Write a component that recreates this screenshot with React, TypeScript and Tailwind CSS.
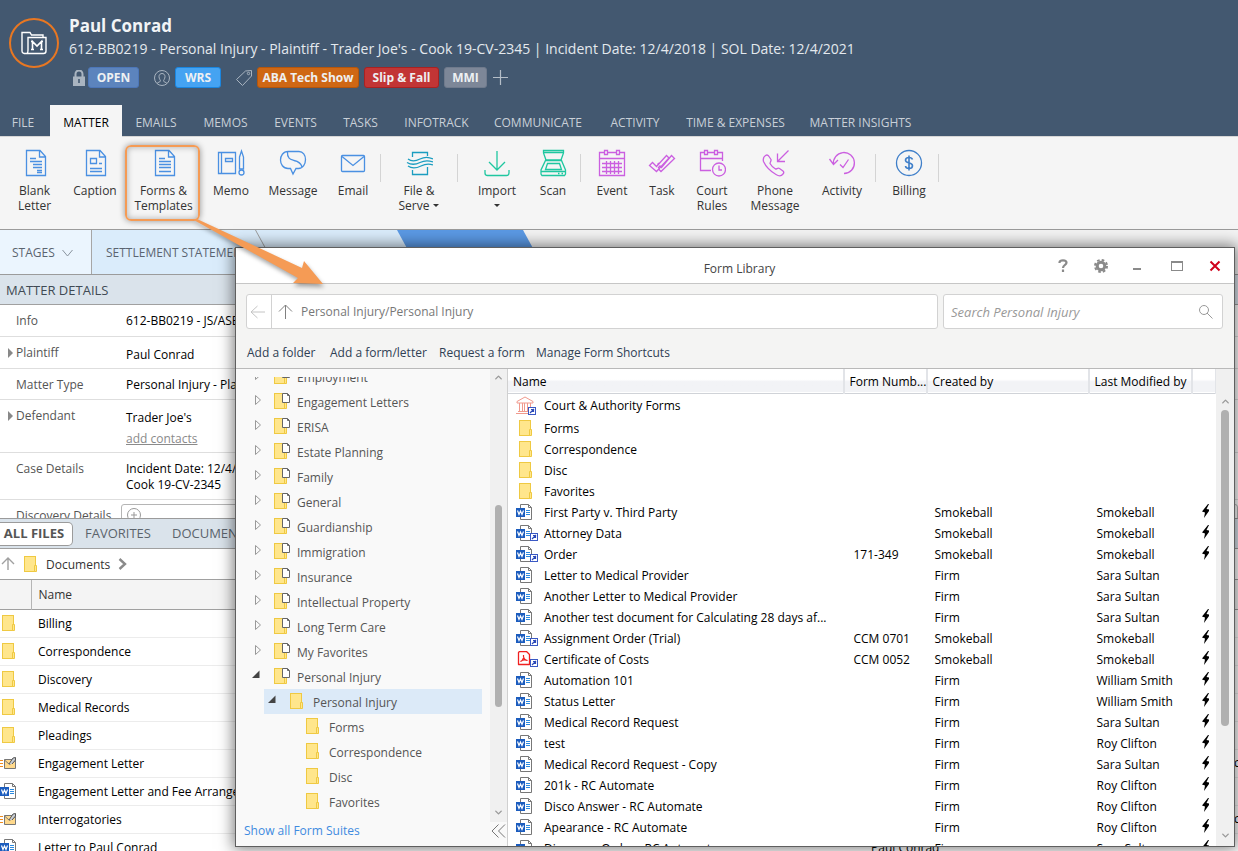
import React from 'react';
import { ChevronDown, ChevronUp } from 'lucide-react';

type IconProps = { children: React.ReactNode; color: string };

const RibbonIcon = ({ children, color }: IconProps) => (
  <svg width="28" height="28" viewBox="0 0 28 28" fill="none" stroke={color} strokeWidth="1.3" className="shrink-0">
    {children}
  </svg>
);

const BLUE = '#4a90e2';
const TEAL = '#1b9dc0';
const GREEN = '#1fc7a0';
const PURPLE = '#cb5fe0';

const docOutline = 'M5.500 1.500H19L24.500 7.500V26.500H5.500ZM18.500 1.500V8H24.500';

const icons = {
  blank: <RibbonIcon color={BLUE}><path d={docOutline} /><path d="M9 9.500H15M9 12.500H21M12 15.500H21M12 18.500H21M16 21.500H21M16 23.500H21" /></RibbonIcon>,
  caption: <RibbonIcon color={BLUE}><path d={docOutline} /><path d="M9.500 9.500H15.500V14.500H9.500ZM18 14.500H21M9 19.500H21M9 22.500H21" /></RibbonIcon>,
  forms: <RibbonIcon color={BLUE}><path d={docOutline} /><path d="M9 9.500H15M9 12.500H21M9 15.500H21M9 18.500H21M9 22.500H21" /></RibbonIcon>,
  memo: (
    <RibbonIcon color={BLUE}>
      <path d="M1.500 3.500H18.500V24.500H1.500ZM4.500 3.500V24.500M8.500 9.500H15.500V12.500H8.500ZM22.500 8L24.500 2L26.500 8V20H22.500Z" />
      <ellipse cx="24.500" cy="23.500" rx="2.500" ry="2.500" />
    </RibbonIcon>
  ),
  message: (
    <RibbonIcon color={BLUE}>
      <path d="M9 2.500H20C24 2.500 26.500 6 26.500 10.500S24 19.500 19.500 19.500H17L14 25L11.500 19.500H9C4 19.500 1.500 15 1.500 11S4 2.500 9 2.500ZM8.500 3C8 10 12 10.500 15 11.500C20 12.500 22 14 23 18" />
    </RibbonIcon>
  ),
  email: <RibbonIcon color={BLUE}><rect x="2.500" y="6.500" width="23" height="16" rx="1" /><path d="M3 7.500L14 16.500L25 7.500" /></RibbonIcon>,
  fileServe: (
    <RibbonIcon color={TEAL}>
      <path d="M7.500 8V3.500H22.500V7M7.500 21V25.500H22.500V18" />
      <path d="M3 10C7 13 11 12 15 10S24 8 28 10M2 13.500C7 16.500 11 15.500 15 13.500S24 11.500 28 13M3 17C7 20 12 19 16 17S24 14.500 28 16" />
    </RibbonIcon>
  ),
  importIcon: <RibbonIcon color={GREEN}><path d="M14 2V21M6 13L14 21L22 13M2 21V24Q2 26.500 4.500 26.500H23.500Q26 26.500 26 24V21" /></RibbonIcon>,
  scan: (
    <RibbonIcon color={GREEN}>
      <path d="M4.500 1.500H24.500V4L22 11H7L4.500 4ZM5 3.500H24M6.500 11.500H22.500L26.500 21V25L25.500 26.500H3L2 25V21ZM8.500 14.500H20.500L22.500 20.500H6.500ZM2 22.500H26M19 24.500H20.500M22.500 24.500H24" />
    </RibbonIcon>
  ),
  event: (
    <RibbonIcon color={PURPLE}>
      <path d="M6 3.500H1.500V26.500H26.500V3.500H22M10 3.500H18M1.500 9.500H26.500M6.500 1.500H9.500V5.500H6.500ZM18.500 1.500H21.500V5.500H18.500ZM4 14.500H24M4 18.500H24M4 22.500H24M8.500 12V25M12.500 12V25M16.500 12V25M20.500 12V25" />
    </RibbonIcon>
  ),
  task: (
    <RibbonIcon color={PURPLE}>
      <path d="M1.500 16.500L4.500 13.500L8.500 17.500L18.500 6.500L21 9L8.500 22.500Z" />
      <path d="M10 19L12 17L13.500 18.500L23.500 6.500L26.500 9.500L13 22.500L10.500 20M9.500 15.500L11 14" />
    </RibbonIcon>
  ),
  court: (
    <RibbonIcon color={PURPLE}>
      <path d="M6 3.500H2.500V21.500H13M10 3.500H16M20 3.500H24.500V12M2.500 9.500H24.500M6.500 1.500H9.500V5.500H6.500ZM16.500 1.500H19.500V5.500H16.500ZM21 16.500V21H24" />
      <circle cx="21" cy="20.500" r="6.500" />
    </RibbonIcon>
  ),
  phone: (
    <RibbonIcon color={PURPLE}>
      <path d="M4.500 6.500C6 5.500 7 6 8 7.500L10 10.500C10.500 12 9 13 9 14.500Q11 18 14.500 20C16 20 17 18.500 18.500 19.500L22 22Q23.500 23.500 22 25C20.500 27 18 27.500 15 25.500C9 22 5 18 2.500 12.500Q1.500 8.500 4.500 6.500Z" strokeLinejoin="round" />
      <path d="M27.500 1.500L16.500 12.500M16.500 4.500V12.500H24" />
    </RibbonIcon>
  ),
  activity: (
    <RibbonIcon color={PURPLE}>
      <path d="M5.500 15.500A10.500 10.500 0 1 1 16 24.500M1.500 10L5.500 15.500L10 11M12 15.500L15 18.500L20.500 10.500" />
    </RibbonIcon>
  ),
  billing: (
    <RibbonIcon color="#3f7fc9">
      <circle cx="14" cy="14" r="12.500" />
      <path d="M17.500 10.500C17 9 15.500 8.500 14 8.500C12 8.500 10.500 9.500 10.500 11.200C10.500 14.500 17.500 13 17.500 16.800C17.500 18.500 16 19.500 14 19.500C12 19.500 10.700 18.500 10.500 17M14 6.500V21.500" strokeWidth="1.600" />
    </RibbonIcon>
  ),
};

const Folder = ({ page = false }: { page?: boolean }) => (
  <svg width="17" height="17" viewBox="0 0 17 17" className="shrink-0">
    <rect x="0.500" y="0.500" width="11" height="15" fill="#ffe68c" stroke="#efc942" />
    <path d="M10.500 9.500H12.500V15.500H10.500Z" fill="#ffe68c" stroke="#efc942" />
    {page && <path d="M8.500 0.500H13.500L15.500 2.500V9.500H8.500ZM13.500 0.500V2.500H15.500" fill="#fff" stroke="#666" />}
  </svg>
);

const Shortcut = () => (
  <g>
    <rect x="14.500" y="8.500" width="7" height="7" fill="#fff" stroke="#3a58c4" />
    <path d="M16 14L20 10M17 10.500H19.500V13" fill="none" stroke="#2b49b8" strokeWidth="1.200" />
  </g>
);

const WordIcon = ({ shortcut = false }: { shortcut?: boolean }) => (
  <svg width="22" height="17" viewBox="0 0 22 17" className="shrink-0">
    <path d="M4.500 0.500H12.500L15.500 3.500V15.500H4.500Z" fill="#fff" stroke="#777" />
    <path d="M12.500 0.500V3.500H15.500" fill="none" stroke="#777" />
    <path d="M10 6.500H14M10 8.500H14M10 10.500H14" stroke="#2b8ae0" />
    <rect y="4" width="9" height="9" fill="#1b5cbe" />
    <path d="M1.500 6.500L3 10.500L4.500 7L6 10.500L7.500 6.500" fill="none" stroke="#fff" strokeWidth="1.200" />
    {shortcut && <Shortcut />}
  </svg>
);

const PdfIcon = () => (
  <svg width="22" height="17" viewBox="0 0 22 17" className="shrink-0">
    <path d="M3.500 0.500H10.500L13.500 3.500V13.500H2.500V1.500Z" fill="#fff" stroke="#f02020" strokeWidth="1.300" strokeLinejoin="round" />
    <path d="M4.500 10.500C6.500 10 8 7 7.500 4C7 7 9 9.500 11.500 9.500C9 8.500 6.500 9 4.500 10.500Z" fill="none" stroke="#f02020" strokeWidth="1.200" />
    <Shortcut />
  </svg>
);

const CourtIcon = () => (
  <svg width="22" height="20" viewBox="0 0 22 20" className="shrink-0">
    <path d="M1 5.500L9 1L17 5.500V7H1ZM3.500 7V15M6.500 7V15M8.500 7V15M11.500 7V15M14.500 7V15M2 15.500H16M0 17.500H18" fill="none" stroke="#f09a8e" />
    <rect x="12.500" y="11.500" width="7" height="7" fill="#fff" stroke="#3a58c4" />
    <path d="M14 17L18 13M15 13.500H17.500V16" fill="none" stroke="#2b49b8" strokeWidth="1.200" />
  </svg>
);

const MailIcon = () => (
  <svg width="18" height="14" viewBox="0 0 18 14" className="shrink-0">
    <path d="M0 4.500H3M0 7.500H3M0 10.500H3" stroke="#f08c1e" />
    <path d="M4.500 3.500H15.500V12.500H4.500Z" fill="#ffd98c" stroke="#777" />
    <path d="M4.500 4L9.500 8.500L15.500 4.500" fill="none" stroke="#777" />
    <path d="M9 8L13 2L15.500 1.500V4L12 8" fill="#c9ced4" stroke="#555" />
  </svg>
);

const Bolt = () => (
  <svg width="7" height="14" viewBox="0 0 7 14" className="block">
    <path d="M6 0L0 7.500L3 8.500L2 14L7 7V5.500L4.500 5L7 0Z" fill="#000" />
  </svg>
);

const tabs = [
  { label: 'FILE', width: 'w-[50px] pr-1' },
  { label: 'MATTER', width: 'w-[72px]', active: true },
  { label: 'EMAILS', width: 'w-[68px]' },
  { label: 'MEMOS', width: 'w-[71px]' },
  { label: 'EVENTS', width: 'w-[69px]' },
  { label: 'TASKS', width: 'w-[61px]' },
  { label: 'INFOTRACK', width: 'w-[91px]' },
  { label: 'COMMUNICATE', width: 'w-[112px]' },
  { label: 'ACTIVITY', width: 'w-[82px]' },
  { label: 'TIME & EXPENSES', width: 'w-[119px]' },
  { label: 'MATTER INSIGHTS', width: 'w-[131px]' },
];

type RibbonItem = { label: string[]; icon?: React.ReactNode; width: string; caret?: boolean; active?: boolean };

const ribbon: (RibbonItem | null)[] = [
  { label: ['Blank', 'Letter'], icon: icons.blank, width: 'w-[61px] ml-1' },
  { label: ['Caption'], icon: icons.caption, width: 'w-[60px]' },
  { label: ['Forms &', 'Templates'], icon: icons.forms, width: 'w-[77px]', active: true },
  { label: ['Memo'], icon: icons.memo, width: 'w-[58px]' },
  { label: ['Message'], icon: icons.message, width: 'w-[66px]' },
  { label: ['Email'], icon: icons.email, width: 'w-[54px]' },
  null,
  { label: ['File &', 'Serve'], icon: icons.fileServe, width: 'w-[76px]', caret: true },
  null,
  { label: ['Import', ''], icon: icons.importIcon, width: 'w-[78px]', caret: true },
  { label: ['Scan'], icon: icons.scan, width: 'w-[34px] mr-2.5' },
  null,
  { label: ['Event'], icon: icons.event, width: 'w-[52px] ml-[5px]' },
  { label: ['Task'], icon: icons.task, width: 'w-[48px]' },
  { label: ['Court', 'Rules'], icon: icons.court, width: 'w-[52px]' },
  { label: ['Phone', 'Message'], icon: icons.phone, width: 'w-[74px]' },
  { label: ['Activity'], icon: icons.activity, width: 'w-[60px] mr-[3px]' },
  null,
  { label: ['Billing'], icon: icons.billing, width: 'w-[58px] ml-1' },
  null,
];

const files = [
  { name: 'Billing', kind: 'folder' },
  { name: 'Correspondence', kind: 'folder' },
  { name: 'Discovery', kind: 'folder' },
  { name: 'Medical Records', kind: 'folder' },
  { name: 'Pleadings', kind: 'folder' },
  { name: 'Engagement Letter', kind: 'mail', more: 'c' },
  { name: 'Engagement Letter and Fee Arrangement', kind: 'word' },
  { name: 'Interrogatories', kind: 'mail', more: 'c' },
  { name: 'Letter to Paul Conrad', kind: 'word', contact: 'Paul Conrad' },
];

const suites = [
  'Employment', 'Engagement Letters', 'ERISA', 'Estate Planning', 'Family', 'General', 'Guardianship',
  'Immigration', 'Insurance', 'Intellectual Property', 'Long Term Care', 'My Favorites',
];

type FormRow = [kind: string, name: string, number?: string, created?: string, modified?: string, bolt?: boolean];

const forms: FormRow[] = [
  ['court', 'Court & Authority Forms'],
  ['folder', 'Forms'],
  ['folder', 'Correspondence'],
  ['folder', 'Disc'],
  ['folder', 'Favorites'],
  ['word', 'First Party v. Third Party', '', 'Smokeball', 'Smokeball', true],
  ['link', 'Attorney Data', '', 'Smokeball', 'Smokeball', true],
  ['link', 'Order', '171-349', 'Smokeball', 'Smokeball', true],
  ['word', 'Letter to Medical Provider', '', 'Firm', 'Sara Sultan'],
  ['word', 'Another Letter to Medical Provider', '', 'Firm', 'Sara Sultan'],
  ['word', 'Another test document for Calculating 28 days af...', '', 'Firm', 'Sara Sultan', true],
  ['link', 'Assignment Order (Trial)', 'CCM 0701', 'Smokeball', 'Smokeball', true],
  ['pdf', 'Certificate of Costs', 'CCM 0052', 'Smokeball', 'Smokeball', true],
  ['word', 'Automation 101', '', 'Firm', 'William Smith', true],
  ['word', 'Status Letter', '', 'Firm', 'William Smith', true],
  ['word', 'Medical Record Request', '', 'Firm', 'Sara Sultan', true],
  ['word', 'test', '', 'Firm', 'Roy Clifton', true],
  ['word', 'Medical Record Request - Copy', '', 'Firm', 'Sara Sultan', true],
  ['word', '201k - RC Automate', '', 'Firm', 'Roy Clifton', true],
  ['word', 'Disco Answer - RC Automate', '', 'Firm', 'Roy Clifton', true],
  ['word', 'Apearance - RC Automate', '', 'Firm', 'Roy Clifton', true],
  ['word', 'Discovery Order - RC Automate', '', 'Firm', 'Sara Sultan', true],
];

const formIcon = (kind: string) => {
  if (kind === 'court') return <CourtIcon />;
  if (kind === 'pdf') return <PdfIcon />;
  if (kind === 'folder') return <span className="ml-[3px]"><Folder /></span>;
  return <WordIcon shortcut={kind === 'link'} />;
};

const Header = () => (
  <header className="bg-[#435870] h-[136px] shrink-0 flex flex-col justify-between">
    <div className="flex pl-[9px] pt-4">
      <div className="w-[50px] h-[50px] mt-0.5 rounded-full border-2 border-[#e87722] flex items-center justify-center">
        <svg width="26" height="24" viewBox="0 0 26 24" fill="none" stroke="#fff" strokeWidth="1.4">
          <path d="M6 22.500Q1 23 1 20V1.500H9L10.500 4H22V6.500M6 22.500Q7 22 7 19V6.500H25V20Q25 22.500 22.500 22.500Z" />
          <path d="M11.500 18.500V10.500L16 15L20.500 10.500V18.500M10 18.500H13M19 18.500H22M10 10.500H11.500M20.500 10.500H22" strokeWidth="1.600" />
        </svg>
      </div>
      <div className="pl-2.5">
        <h1 className="text-[17px] leading-5 font-bold text-[#f2f4f6]">Paul Conrad</h1>
        <p className="text-[14px] leading-[25px] text-[#e4e9ee]">
          612-BB0219 - Personal Injury - Plaintiff - Trader Joe's - Cook 19-CV-2345 | Incident Date: 12/4/2018 | SOL Date: 12/4/2021
        </p>
        <div className="flex items-center pt-1.5 pl-1 text-[12px] leading-[19px] font-bold text-[#eef0f2] text-center">
          <svg width="12" height="16" viewBox="0 0 12 16" fill="none" className="mr-[3px]">
            <path d="M2.500 7V4A3.500 3.500 0 0 1 9.500 4V7" stroke="#a9b4c0" strokeWidth="2" />
            <rect y="6.500" width="12" height="9.500" fill="#a9b4c0" />
            <path d="M6 9V13" stroke="#435870" strokeWidth="1.600" />
          </svg>
          <span className="w-[51px] rounded-[3px] border border-[#4c76b8] bg-[#5c84bd]">OPEN</span>
          <svg width="16" height="16" viewBox="0 0 16 16" fill="none" stroke="#a9b4c0" className="ml-[15px] mr-[5px]">
            <circle cx="8" cy="8" r="7.500" />
            <path d="M3 13.500C4 12 6.500 12 6.500 11C6.500 10 5 9 5 6.500C5 4.500 6.500 3.500 8 3.500S11 4.500 11 6.500C11 9 9.500 10 9.500 11C9.500 12 12 12 13 13.500" />
          </svg>
          <span className="w-[46px] rounded-[3px] border border-[#1a86e0] bg-[#45a3f2]">WRS</span>
          <svg width="16" height="16" viewBox="0 0 16 16" fill="none" stroke="#a9b4c0" className="ml-[15px] mr-[5px]">
            <path d="M9.500 1L15.500 0.500V6L6.500 15.500L0.500 9.500Z" />
            <circle cx="12.500" cy="3.500" r="1.200" />
          </svg>
          <span className="w-[102px] rounded-[3px] border border-[#b4560c] bg-[#cf6714]">ABA Tech Show</span>
          <span className="w-[75px] ml-[5px] rounded-[3px] border border-[#a82222] bg-[#c23535]">Slip &amp; Fall</span>
          <span className="w-[43px] ml-[5px] rounded-[3px] border border-[#6f7a8c] bg-[#7d8798]">MMI</span>
          <button aria-label="Add tag" className="ml-1.5">
            <svg width="15" height="15" viewBox="0 0 15 15" stroke="#b5bec8" strokeWidth="1.2"><path d="M7.500 0V15M0 7.500H15" /></svg>
          </button>
        </div>
      </div>
    </div>
    <nav className="flex text-[12px] text-[#c9d0d8]">
      {tabs.map((t) => (
        <button
          key={t.label}
          className={`pt-1 shrink-0 whitespace-nowrap ${t.width} ${t.active ? 'relative h-8 -mb-px bg-[#f5f5f5] text-black' : 'h-[31px]'}`}
        >
          {t.label}
        </button>
      ))}
    </nav>
  </header>
);

const Ribbon = () => (
  <div className="h-[94px] shrink-0 flex bg-[#f5f5f5] border-t border-t-[#d6d6d6] border-b border-b-[#9b9b9b] text-[12px] leading-[15px] text-[#333]">
    {ribbon.map((item, i) =>
      item ? (
        <button key={i} className={`relative flex flex-col items-center pt-3 shrink-0 whitespace-nowrap ${item.width}`}>
          {item.active && (
            <span className="absolute left-0 top-2 w-[75px] h-[76px] rounded-md border-2 border-[#f59b55] shadow-[0_0_6px_rgba(0,0,0,0.4),inset_0_0_6px_rgba(0,0,0,0.3)]" />
          )}
          {item.icon}
          <span className="pt-1.5">{item.label[0]}</span>
          {item.label.length > 1 && (
            <span className="flex items-center justify-center gap-1 h-[15px]">
              {item.label[1]}
              {item.caret && <span className="border-x-[3px] border-x-transparent border-t-[3px] border-t-[#333]" />}
            </span>
          )}
        </button>
      ) : (
        <span key={i} className="w-px h-7 mt-[17px] shrink-0 bg-[#d4d4d4]" />
      ),
    )}
  </div>
);

const arrowClip = '[clip-path:polygon(0_0,calc(100%-12px)_0,100%_50%,calc(100%-12px)_100%,0_100%)]';

const Stages = () => (
  <div className="h-[44px] shrink-0 flex bg-[#f3f3f3] text-[12px] text-[#5b6470]">
    <button className="w-[92px] border-r border-[#a6a6a6] bg-[#ebf5fe] flex items-center gap-[7px] pl-3 pt-0.5">
      STAGES
      <svg width="11" height="8" viewBox="0 0 11 8" fill="none" stroke="#8a949e"><path d="M0.500 1L5.500 7L10.500 1" /></svg>
    </button>
    <button className={`relative z-20 w-[176px] bg-[#9b9b9b] ${arrowClip}`}>
      <span className={`flex h-full items-center mr-px bg-[#daecfb] pl-3.5 pt-0.5 whitespace-nowrap ${arrowClip}`}>SETTLEMENT STATEMENT</span>
    </button>
    <button aria-label="Next stage" className={`relative z-10 -ml-3 w-[153px] bg-[#daecfb] ${arrowClip}`} />
    <button aria-label="Current stage" className={`-ml-3 w-[138px] bg-[#5b99e4] ${arrowClip}`} />
  </div>
);

const Triangle = () => (
  <span className="w-0 h-0 border-y-[5px] border-y-transparent border-l-[5px] border-l-[#888]" />
);

const DetailRow = ({ label, children, height, arrow }: { label: string; children: React.ReactNode; height: string; arrow?: boolean }) => (
  <div className={`flex border-b border-[#dedede] text-[12px] leading-4 ${height}`}>
    <dt className="w-[126px] shrink-0 flex h-8 items-center text-[#555]">
      <span className="w-4 flex pl-2">{arrow && <Triangle />}</span>
      {label}
    </dt>
    <dd className="pt-2 text-black whitespace-nowrap">{children}</dd>
  </div>
);

const MatterDetails = () => (
  <section className="h-[244px] shrink-0 overflow-hidden border-t border-[#9b9b9b] bg-white">
    <h2 className="h-[30px] leading-[30px] pl-1.5 text-[13px] text-[#404a54] bg-[#dae3eb] border-b border-[#a0a0a0]">MATTER DETAILS</h2>
    <dl>
      <DetailRow label="Info" height="h-8">612-BB0219 - JS/ASB</DetailRow>
      <DetailRow label="Plaintiff" height="h-8" arrow><p className="pt-0.5">Paul Conrad</p></DetailRow>
      <DetailRow label="Matter Type" height="h-[31px]">Personal Injury - Plaintiff</DetailRow>
      <DetailRow label="Defendant" height="h-[53px]" arrow>
        <p className="pt-0.5">Trader Joe's</p>
        <a href="#contacts" className="block pt-[5px] text-[#8a8a8a] underline">add contacts</a>
      </DetailRow>
      <DetailRow label="Case Details" height="h-[47px]">
        <p>Incident Date: 12/4/2018</p>
        <p>Cook 19-CV-2345</p>
      </DetailRow>
      <div className="flex text-[12px] leading-4 text-[#555] whitespace-nowrap">
        <span className="w-[121px] shrink-0 pl-4 pt-2">Discovery Details</span>
        <button aria-label="Add discovery detail" className="mt-1 h-7 flex-1 border border-[#b5b5b5] rounded-[3px] pl-[5px] flex items-start pt-[3px]">
          <svg width="14" height="14" viewBox="0 0 14 14" fill="none" stroke="#999"><circle cx="7" cy="7" r="6.500" /><path d="M7 4V10M4 7H10" /></svg>
        </button>
      </div>
    </dl>
  </section>
);

const fileIcon = (kind: string) => {
  if (kind === 'mail') return <MailIcon />;
  if (kind === 'word') return <WordIcon />;
  return <span className="block ml-0.5"><Folder /></span>;
};

const Files = () => (
  <section className="flex-1 min-h-0 overflow-hidden bg-white border-t border-[#9b9b9b]">
    <div className="h-[30px] flex items-center bg-[#dae3eb] border-b border-[#a0a0a0] text-[13px] text-[#5b636b]">
      <button className="h-6 w-[73px] pr-1 rounded-r-[5px] border border-l-0 border-[#9b9b9b] bg-white font-bold text-[#555]">ALL FILES</button>
      <button className="ml-3">FAVORITES</button>
      <button className="ml-[21px]">DOCUMENTS</button>
    </div>
    <div className="h-[31px] flex items-center text-[12px] text-[#333] border-b border-[#a0a0a0]">
      <svg width="16" height="14" viewBox="0 0 16 14" fill="none" stroke="#a0a0a0" strokeWidth="1.4"><path d="M8 1V13M2 7L8 1L14 7" /></svg>
      <span className="ml-2"><Folder /></span>
      <span className="ml-[5px] mr-2 pt-0.5">Documents</span>
      <svg width="9" height="14" viewBox="0 0 9 14" fill="none" stroke="#8a8a8a" strokeWidth="2.4"><path d="M1.500 2L7 7L1.500 12" /></svg>
    </div>
    <table className="w-full table-fixed text-[12px] text-left whitespace-nowrap">
      <thead>
        <tr className="h-[29px] bg-[#f4f4f4] border-b border-[#a0a0a0] text-[#333]">
          <th className="w-[31px] border-r border-[#b5b5b5]" />
          <th className="pl-[7px] pt-0.5 font-normal">Name</th>
          <th className="w-[467px]" />
          <th className="w-1" />
        </tr>
      </thead>
      <tbody>
        {files.map((f) => (
          <tr key={f.name} className="h-7 border-b border-[#ececec]">
            <td>{fileIcon(f.kind)}</td>
            <td className="pl-[7px] pt-0.5">{f.name}</td>
            <td className="pl-[104px] pt-0.5">{f.contact}</td>
            <td>{f.more}</td>
          </tr>
        ))}
      </tbody>
    </table>
  </section>
);

const Scrollbar = ({ className, thumb }: { className: string; thumb: React.ReactNode }) => (
  <div className={`shrink-0 bg-[#f0f0f0] flex flex-col items-center text-[#999] ${className}`}>
    <ChevronUp size={11} strokeWidth={3} className="shrink-0" />
    {thumb}
    <ChevronDown size={11} strokeWidth={3} className="shrink-0" />
  </div>
);

const Closed = () => (
  <svg width="9" height="12" viewBox="0 0 9 12" fill="none" stroke="#999"><path d="M1.500 1.500V10.500L6.500 6Z" /></svg>
);
const Opened = () => (
  <svg width="9" height="9" viewBox="0 0 9 9"><path d="M8.500 0.500V8H1Z" fill="#444" /></svg>
);

const Tree = () => (
  <div className="flex-1 min-h-0 flex">
    <div className="flex-1 mt-2 overflow-hidden text-[12px] text-[#555]">
      <ul className="-mt-[13px]">
        {suites.map((s) => (
          <li key={s} className="h-[25px] flex items-center">
            <button aria-label={`Expand ${s}`} className="w-[38px] pl-[18px] pb-1 shrink-0"><Closed /></button>
            <Folder page />
            <span className="pl-1.5 pt-0.5">{s}</span>
          </li>
        ))}
        <li>
          <div className="h-[25px] flex items-center">
            <button aria-label="Collapse Personal Injury" className="w-[38px] pl-[15px] pb-1 shrink-0"><Opened /></button>
            <Folder page />
            <span className="pl-1.5 pt-0.5">Personal Injury</span>
          </div>
          <div className="h-[25px] flex items-center ml-7 mr-2 bg-[#dceaf8]">
            <button aria-label="Collapse folder" className="w-[26px] pl-[3px] pb-1 shrink-0"><Opened /></button>
            <Folder />
            <span className="pl-1.5 pt-0.5">Personal Injury</span>
          </div>
          <ul>
            {['Forms', 'Correspondence', 'Disc', 'Favorites'].map((f) => (
              <li key={f} className="h-[25px] flex items-center pl-[70px]">
                <Folder />
                <span className="pl-1.5 pt-0.5">{f}</span>
              </li>
            ))}
          </ul>
        </li>
      </ul>
    </div>
    <Scrollbar
      className="w-[17px] pt-[3px] pb-1"
      thumb={
        <>
          <span className="flex-[121]" />
          <span className="flex-[199] w-[7px] rounded-full bg-[#b0b0b0]" />
          <span className="flex-[99]" />
        </>
      }
    />
  </div>
);

const headCell = 'border-r-2 border-[#e2e4e8] font-normal pl-[5px] pt-0.5';

const FormTable = () => (
  <div className="flex-1 min-w-0 overflow-hidden">
    <table className="w-full table-fixed text-left text-[12px] text-black whitespace-nowrap">
      <thead>
        <tr className="h-6 border-b border-[#d0d3d8] bg-linear-to-b from-white from-45% to-[#f2f3f6] to-55%">
          <th className={headCell}>Name</th>
          <th className={`w-[83px] ${headCell}`}>Form Numb...</th>
          <th className={`w-[162px] ${headCell}`}>Created by</th>
          <th className={`w-[103px] ${headCell}`}>Last Modified by</th>
          <th className="w-6 border-r border-[#e2e4e8]" />
        </tr>
      </thead>
      <tbody>
        {forms.map(([kind, name, number, created, modified, bolt]) => (
          <tr key={name} className={kind === 'court' ? 'h-[25px]' : 'h-[21px]'}>
            <td className="pl-2">
              <span className="flex items-center">
                <span className="w-7 flex">{formIcon(kind)}</span>
                {name}
              </span>
            </td>
            <td className="pl-2.5">{number}</td>
            <td className="pl-2">{created}</td>
            <td className="pl-2">{modified}</td>
            <td className="pl-2.5 pb-1">{bolt && <Bolt />}</td>
          </tr>
        ))}
      </tbody>
    </table>
  </div>
);

const windowButton = 'w-[38px] h-full flex items-center justify-center';

const FormLibrary = () => (
  <div
    role="dialog"
    aria-labelledby="library-title"
    className="absolute z-30 left-[235px] top-[247px] right-[3px] bottom-1 flex flex-col border border-[#5f5f5f] bg-[#f4f4f3] shadow-[0_0_14px_2px_rgba(0,0,0,0.5)]"
  >
    <div className="h-9 shrink-0 flex items-center bg-white border-b border-[#c6c6c6]">
      <span className="w-[199px]" />
      <h2 id="library-title" className="flex-1 pt-1.5 text-center text-[12px] text-[#444]">Form Library</h2>
      <div className="h-full flex items-center text-[#8a8a8a]">
        <button aria-label="Help" className={windowButton}>
          <svg width="10" height="13" viewBox="0 0 10 13" fill="none" stroke="#8a8a8a" strokeWidth="2.200">
            <path d="M1.500 4V3.500Q1.500 1.300 5 1.300T8.500 3.800C8.500 6 5 5.800 5 9M5 10.500V13" />
          </svg>
        </button>
        <button aria-label="Settings" className={windowButton}>
          <svg width="14" height="14" viewBox="0 0 14 14" fill="none" stroke="#8a8a8a">
            <circle cx="7" cy="7" r="3.800" strokeWidth="3" />
            <circle cx="7" cy="7" r="6" strokeWidth="2" strokeDasharray="2.600 2.112" />
          </svg>
        </button>
        <button aria-label="Minimize" className={`${windowButton} pt-1.5 pr-1`}><span className="w-2 h-0.5 bg-[#8a8a8a]" /></button>
        <button aria-label="Maximize" className={windowButton}><span className="w-3 h-2.5 border border-t-2 border-[#8a8a8a]" /></button>
        <button aria-label="Close" className={windowButton}>
          <svg width="12" height="12" viewBox="0 0 12 12" stroke="#d0021b" strokeWidth="2"><path d="M1.500 1.500L10.500 10.500M10.500 1.500L1.500 10.500" /></svg>
        </button>
      </div>
    </div>
    <div className="h-[85px] shrink-0 border-b border-[#b9b9b9] pl-2.5 pr-[11px] pt-2.5">
      <div className="flex gap-[5px] h-[35px]">
        <div className="flex-1 flex items-center border border-[#d2d2d2] rounded-[3px] bg-white">
          <button aria-label="Back" className="w-[25px] h-full border-r border-[#d2d2d2] flex items-center pl-[3px]">
            <svg width="15" height="14" viewBox="0 0 15 14" fill="none" stroke="#c4c4c4"><path d="M1 7H15M7.500 1L1 7L7.500 13" /></svg>
          </button>
          <button aria-label="Up" className="px-1.5">
            <svg width="15" height="15" viewBox="0 0 15 15" fill="none" stroke="#808080"><path d="M7.500 15V1M1 7.500L7.500 1L14 7.500" /></svg>
          </button>
          <input aria-label="Folder path" readOnly value="Personal Injury/Personal Injury" className="flex-1 text-[12px] text-[#777] pl-0.5 outline-none" />
        </div>
        <div className="w-[280px] flex items-center border border-[#d2d2d2] rounded-[3px] bg-white pl-[7px] pr-[9px]">
          <input aria-label="Search" placeholder="Search Personal Injury" className="flex-1 pt-0.5 text-[13px] italic placeholder:text-[#999] outline-none" />
          <svg width="14" height="14" viewBox="0 0 14 14" fill="none" stroke="#999"><circle cx="5" cy="5" r="4.500" /><path d="M8 8L13.500 13.500" /></svg>
        </div>
      </div>
      <div className="flex pt-3.5 pl-px text-[12px] leading-5 text-[#2f4054] whitespace-nowrap">
        <button className="w-[83px] text-left">Add a folder</button>
        <button className="w-[109px] text-left">Add a form/letter</button>
        <button className="w-[97px] text-left">Request a form</button>
        <button>Manage Form Shortcuts</button>
      </div>
    </div>
    <div className="flex-1 min-h-0 flex">
      <div className="w-[272px] shrink-0 flex flex-col bg-[#f9f9f9] border-r border-[#d0d0d0]">
        <Tree />
        <div className="h-6 shrink-0 flex items-center justify-between pl-2 text-[12px] text-[#3f8be0]">
          <a href="#suites" className="pb-1.5">Show all Form Suites</a>
          <button aria-label="Collapse panel" className="pb-1.5 pr-px">
            <svg width="15" height="14" viewBox="0 0 15 14" fill="none" stroke="#777"><path d="M7.500 0.500L1 7L7.500 13.500M14 0.500L7.500 7L14 13.500" /></svg>
          </button>
        </div>
      </div>
      <div className="flex-1 min-w-0 flex bg-white">
        <FormTable />
        <Scrollbar className="w-[18px] pt-[27px] pb-[5px]" thumb={
          <>
            <span className="flex-[316] mt-[3px] w-2 rounded-full bg-[#b0b0b0]" />
            <span className="flex-[104]" />
          </>
        } />
      </div>
    </div>
  </div>
);

export default function App() {
  return (
    <div className="relative h-screen overflow-hidden flex flex-col font-['Open_Sans','Noto_Sans',sans-serif]">
      <Header />
      <Ribbon />
      <Stages />
      <MatterDetails />
      <Files />
      <FormLibrary />
      {/* callout arrow from the Forms & Templates button to the library window */}
      <svg width="140" height="76" viewBox="190 214 140 76" className="absolute z-40 left-[190px] top-[214px] pointer-events-none drop-shadow-[1px_3px_2px_rgba(0,0,0,0.35)]">
        <path d="M192 219L197 219L302 268L304 261L323 284L293 283L298 278Z" fill="#f59b55" />
      </svg>
    </div>
  );
}
